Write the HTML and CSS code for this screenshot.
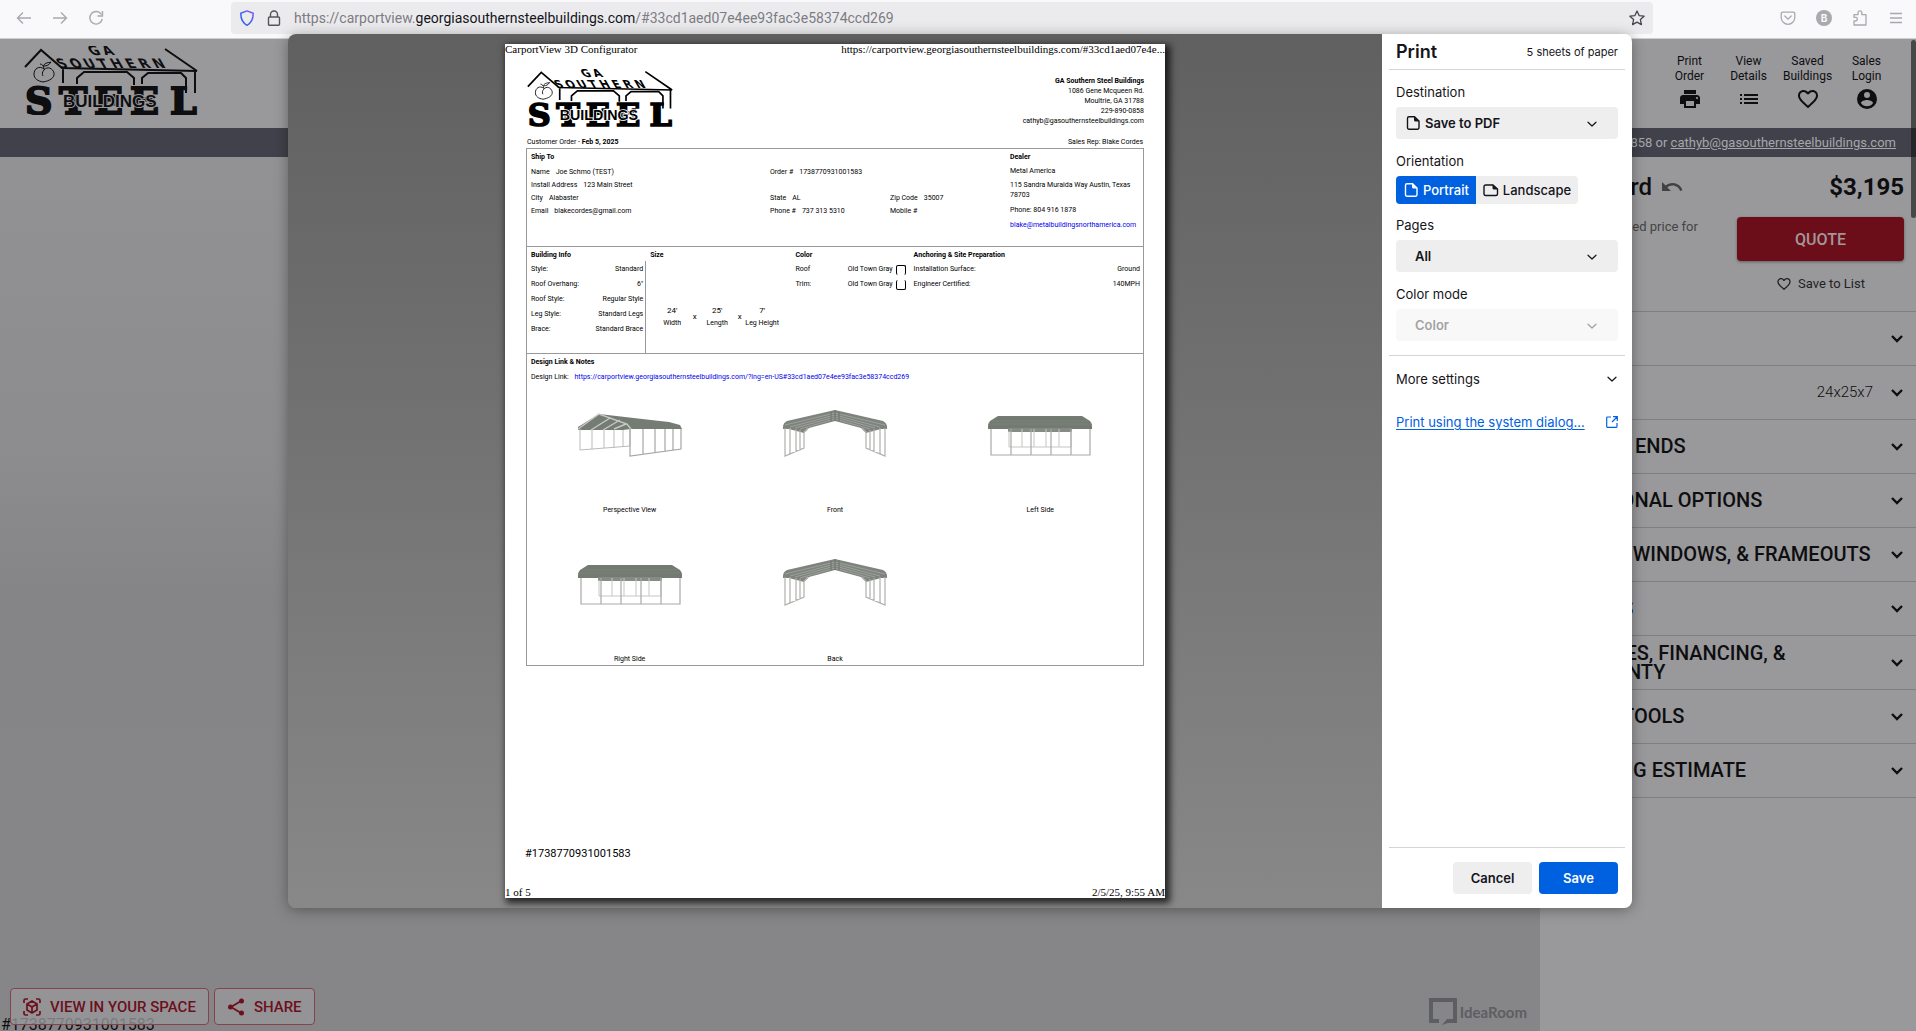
FILE: index.html
```html
<!DOCTYPE html>
<html lang="en">
<head>
<meta charset="utf-8">
<meta name="viewport" content="width=device-width, initial-scale=1">
<title>CarportView 3D Configurator</title>
<link rel="stylesheet" href="styles.css">
</head>
<body>
<svg class="defs" aria-hidden="true">
  <symbol id="chevron" viewBox="0 0 12 12"><path d="M2 4.200 6 8l4-3.800" fill="none" stroke="currentColor" stroke-width="1.200" stroke-linecap="round" stroke-linejoin="round"/></symbol>
  <symbol id="expand" viewBox="0 0 24 24"><path d="M7 9l5 5 5-5" fill="none" stroke="currentColor" stroke-width="2.400"/></symbol>
  <symbol id="heart" viewBox="0 0 24 24"><path fill="currentColor" d="M16.500 3c-1.740 0-3.410.81-4.500 2.090C10.910 3.810 9.240 3 7.500 3 4.420 3 2 5.420 2 8.500c0 3.780 3.400 6.860 8.550 11.540L12 21.350l1.450-1.320C18.600 15.360 22 12.280 22 8.500 22 5.420 19.580 3 16.500 3zm-4.400 15.550-.1.100-.1-.1C7.140 14.240 4 11.390 4 8.500 4 6.500 5.500 5 7.500 5c1.540 0 3.040.99 3.570 2.360h1.870C13.460 5.990 14.960 5 16.500 5c2 0 3.500 1.500 3.500 3.500 0 2.890-3.140 5.740-7.900 10.050z"/></symbol>
  <symbol id="portrait" viewBox="0 0 16 16"><path d="M4 1.700h5.500L14 6v6.800a1.500 1.500 0 0 1-1.500 1.500H4a1.500 1.500 0 0 1-1.500-1.500V3.200A1.500 1.500 0 0 1 4 1.700z" fill="none" stroke="currentColor" stroke-width="1.400"/><path d="M9 1.500V5a1.500 1.500 0 0 0 1.500 1.500H14z" fill="currentColor"/></symbol>
  <symbol id="landscape" viewBox="0 0 16 16"><path d="M2.500 3h7.500L14.500 7v5a1.500 1.500 0 0 1-1.500 1.500H2.500A1.500 1.500 0 0 1 1 12V4.500A1.500 1.500 0 0 1 2.500 3z" fill="none" stroke="currentColor" stroke-width="1.400"/><path d="M9.500 2.500V6A1.500 1.500 0 0 0 11 7.500h4z" fill="currentColor"/></symbol>
  <symbol id="brand" viewBox="0 0 174 69">
    <g fill="none" stroke="currentColor" stroke-width="2">
      <path d="M1 21 17 4l21 18 135 3M141 3l32 22M39 22v15M171 25v22"/>
      <path d="M53 38v-6l7-6h43l7 6v7M118 38v-6l6-5h33l5 5v15"/>
      <path stroke-width="1" d="M20 23c-5-4-10 0-10 5 0 5 4 7 9 8 6-1 12-4 11-9-1-5-7-7-10-3-2 2-2 4-1 6M20 23c0-3-2-5-4-5M19 20c3-4 5-3 8-4-2 3-4 4-7 4"/>
    </g>
    <g fill="currentColor">
      <text class="brand-block" font-size="13" x="65 79" y="9" transform="skewX(30) translate(-3 0)">GA</text>
      <text class="brand-block" font-size="13" x="35 48 62 76 89 104 117 131" y="22" transform="skewX(30) translate(-12 0)">SOUTHERN</text>
      <text class="brand-slab" font-size="38" x="1 35 70 106 146" y="68">STEEL</text>
      <text class="brand-name" font-size="17" x="39" y="61">BUILDINGS</text>
    </g>
  </symbol>
  <symbol id="front" viewBox="0 0 104 60">
    <path d="M52 9 100 20Q104 22 104 26V28H98L83 32 78 27 52 20 26 27 21 32 6 28H0V26Q0 22 4 20z" fill="#7e837d"/>
    <path d="M2 24 52 12l50 12M7 26l45-12 45 12M12 27l40-11 40 11M17 28l35-10 35 10" fill="none" stroke="#a3a7a2" stroke-width=".8"/>
    <path d="M52 9v11M48 11v9M56 11v9" stroke="#6c716b"/>
    <path d="M2 27v28l19-8V31l4-4M7 27v26M13 28v23M17 29v20M102 27v28l-19-8V31l-4-4M97 27v26M91 28v23M87 29v20" fill="none" stroke="#b0b0ac" stroke-width="1.200"/>
  </symbol>
  <symbol id="side" viewBox="0 0 104 60">
    <path d="M10 15h84l8 5q2 2 2 6v2H0v-2q0-4 2-6z" fill="#727a71"/><path d="M20 27h64v4H20z" fill="#868c85"/>
    <path d="M4 20h96M2 23h100" stroke="#7c837b"/>
    <path d="M21 30v16h62V30M34 28v18M46 28v18M58 28v18M71 28v18" fill="none" stroke="#c5c5c3"/>
    <path d="M3 28v26h99V28M23 28v26M43 28v26M63 28v26M83 28v26" fill="none" stroke="#a9aaa7" stroke-width="1.200"/>
  </symbol>
  <symbol id="perspective" viewBox="0 0 104 60">
    <path d="M21 13 73 19 91 21 102 24 104 28 53 28 45 29H0V26z" fill="#757c74"/>
    <path d="M0 28 21 13 49 23l4 5M13 29 32 17M25 29 42 19M36 28 48 23" fill="none" stroke="#c8c9c6" stroke-width="1.400"/>
    <path d="M2 28v21l50-4V27M14 29v19M26 29v18M36 29v18M45 29v17" fill="none" stroke="#bbbbb8"/>
    <path d="M52 27v28l51-7V28M65 28v25M77 28v24M87 28v22M95 28v21" fill="none" stroke="#a6a7a4" stroke-width="1.200"/>
  </symbol>
</svg>

<header class="toolbar">
  <nav class="toolbar-nav">
    <button aria-label="Back"><svg width="16" height="16" viewBox="0 0 16 16"><path d="M15 8H1.500M7 2.500 1.500 8 7 13.500" fill="none" stroke="currentColor" stroke-width="1.400"/></svg></button>
    <button aria-label="Forward"><svg width="16" height="16" viewBox="0 0 16 16"><path d="M1 8h13.500M9 2.500 14.500 8 9 13.500" fill="none" stroke="currentColor" stroke-width="1.400"/></svg></button>
    <button aria-label="Reload"><svg width="16" height="16" viewBox="0 0 16 16"><path d="M13.500 4.500A6.300 6.300 0 1 0 14.300 9M14.500 1v5h-5" fill="none" stroke="currentColor" stroke-width="1.400"/></svg></button>
  </nav>
  <div class="address">
    <svg class="shield" width="16" height="16" viewBox="0 0 16 16"><defs><linearGradient id="sg" x1="0" y1="1" x2="1" y2="0"><stop offset="0" stop-color="#1d62f0"/><stop offset="1" stop-color="#7a5cf5"/></linearGradient></defs><path d="M8 .9 14.200 3.200C14.300 9 12.500 13 8 15.300 3.500 13 1.700 9 1.800 3.200z" fill="none" stroke="url(#sg)" stroke-width="1.500" stroke-linejoin="round"/></svg>
    <svg width="16" height="16" viewBox="0 0 16 16"><path d="M4.500 7V4.500a3.500 3.500 0 0 1 7 0V7M3.500 7h9a1 1 0 0 1 1 1v6.200a1 1 0 0 1-1 1h-9a1 1 0 0 1-1-1V8a1 1 0 0 1 1-1z" fill="none" stroke="#55555c" stroke-width="1.400"/></svg>
    <span class="url">https://carportview.<b>georgiasouthernsteelbuildings.com</b>/#33cd1aed07e4ee93fac3e58374ccd269</span>
    <button class="star" aria-label="Bookmark"><svg width="16" height="16" viewBox="0 0 16 16"><path d="m8 1 2.100 4.600 5 .6-3.700 3.400 1 5L8 12.100l-4.400 2.500 1-5L.9 6.200l5-.6z" fill="none" stroke="#45454c" stroke-width="1.300" stroke-linejoin="round"/></svg></button>
  </div>
  <div class="toolbar-tools">
    <button aria-label="Pocket"><svg width="16" height="16" viewBox="0 0 16 16"><path d="M2.500 2.200h11a1.300 1.300 0 0 1 1.300 1.300V7.500a6.800 6.800 0 0 1-13.600 0v-4a1.300 1.300 0 0 1 1.300-1.300zM4.800 6 8 9.200 11.200 6" fill="none" stroke="currentColor" stroke-width="1.300" stroke-linecap="round"/></svg></button>
    <button class="account" aria-label="Account">B</button>
    <button aria-label="Extensions"><svg width="16" height="16" viewBox="0 0 16 16"><path d="M2 15V11h1.500a1.800 1.800 0 0 0 0-3.600H2V4.600h4V2.800a1.900 1.900 0 0 1 3.800 0v1.800H14V15z" fill="none" stroke="currentColor" stroke-width="1.300" stroke-linejoin="round"/></svg></button>
    <button aria-label="Menu"><svg width="16" height="16" viewBox="0 0 16 16"><path d="M2 3.500h12M2 8h12M2 12.500h12" stroke="currentColor" stroke-width="1.300"/></svg></button>
  </div>
</header>

<main class="site">
  <header class="site-head">
    <svg class="site-logo" viewBox="0 0 174 69" role="img" aria-label="GA Southern Steel Buildings"><use href="#brand"/></svg>
    <nav class="site-nav">
      <a href="#print">Print<br>Order<svg viewBox="0 0 24 24"><path fill="currentColor" d="M19 8H5c-1.660 0-3 1.340-3 3v6h4v4h12v-4h4v-6c0-1.660-1.340-3-3-3zm-3 11H8v-5h8v5zm3-7c-.55 0-1-.45-1-1s.45-1 1-1 1 .45 1 1-.45 1-1 1zm-1-9H6v4h12V3z"/></svg></a>
      <a href="#details">View<br>Details<svg viewBox="0 0 24 24"><path fill="currentColor" d="M3 13h2v-2H3v2zm0 4h2v-2H3v2zm0-8h2V7H3v2zm4 4h14v-2H7v2zm0 4h14v-2H7v2zM7 7v2h14V7H7z"/></svg></a>
      <a href="#saved">Saved<br>Buildings<svg viewBox="0 0 24 24"><use href="#heart"/></svg></a>
      <a href="#login">Sales<br>Login<svg viewBox="0 0 24 24"><path fill="currentColor" d="M12 2a10 10 0 1 0 0 20 10 10 0 0 0 0-20zm0 3a3 3 0 1 1 0 6 3 3 0 0 1 0-6zm0 14.200a7.200 7.200 0 0 1-6-3.220c.03-1.990 4-3.080 6-3.080 1.990 0 5.970 1.090 6 3.080a7.200 7.200 0 0 1-6 3.220z"/></svg></a>
    </nav>
  </header>
  <p class="contact">Call 229-890-0858 or <a href="mailto:cathyb@gasouthernsteelbuildings.com">cathyb@gasouthernsteelbuildings.com</a></p>
  <div class="workspace">
    <section class="canvas">
      <p class="order-tag">#1738770931001583</p>
      <div class="canvas-actions">
        <button><svg width="20" height="20" viewBox="0 0 20 20"><path d="M2 6V3.500A1.500 1.500 0 0 1 3.500 2H6M14 2h2.500A1.500 1.500 0 0 1 18 3.500V6M18 14v2.500a1.500 1.500 0 0 1-1.500 1.500H14M6 18H3.500A1.500 1.500 0 0 1 2 16.500V14M10 4l5 3v6l-5 3-5-3V7zM5 7l5 3 5-3M10 10v6" fill="none" stroke="currentColor" stroke-width="1.700"/></svg>VIEW IN YOUR SPACE</button>
        <button><svg width="20" height="20" viewBox="0 0 20 20"><path d="M15 4 5 10l10 6" fill="none" stroke="currentColor" stroke-width="1.800"/><circle cx="15.500" cy="4" r="2.500" fill="currentColor"/><circle cx="4.500" cy="10" r="2.500" fill="currentColor"/><circle cx="15.500" cy="16" r="2.500" fill="currentColor"/></svg>SHARE</button>
      </div>
      <div class="credit"><svg width="28" height="27" viewBox="0 0 28 27"><path fill="currentColor" fill-rule="evenodd" d="M0 0h28v25h-9l-6 2 5-6h6V4H4v17h6v4H0z"/></svg>IdeaRoom</div>
    </section>
    <aside class="options">
      <div class="summary">
        <h1>Standard <button aria-label="Undo"><svg width="24" height="24" viewBox="0 0 24 24"><path fill="currentColor" d="M12.500 8c-2.650 0-5.050.99-6.900 2.600L2 7v9h9l-3.620-3.620c1.390-1.160 3.160-1.880 5.120-1.880 3.540 0 6.550 2.310 7.600 5.500l2.370-.78C21.080 11.030 17.150 8 12.500 8z"/></svg></button></h1>
        <strong class="price">$3,195</strong>
        <p class="note">Your estimated price for</p>
        <div class="buy">
          <button class="quote">QUOTE</button>
          <button class="save-list"><svg width="16" height="16"><use href="#heart"/></svg>Save to List</button>
        </div>
      </div>
      <ul class="sections">
        <li><button><span>STYLE</span><svg><use href="#expand"/></svg></button></li>
        <li><button><span>SIZE</span><i>24x25x7</i><svg><use href="#expand"/></svg></button></li>
        <li><button><span>SIDES &amp; ENDS</span><svg><use href="#expand"/></svg></button></li>
        <li><button><span>ADDITIONAL OPTIONS</span><svg><use href="#expand"/></svg></button></li>
        <li><button><span>DOORS, WINDOWS, &amp; FRAMEOUTS</span><svg><use href="#expand"/></svg></button></li>
        <li><button><span>COLORS</span><svg><use href="#expand"/></svg></button></li>
        <li><button><span>SERVICES, FINANCING, &amp;<br>WARRANTY</span><svg><use href="#expand"/></svg></button></li>
        <li><button><span>SALES TOOLS</span><svg><use href="#expand"/></svg></button></li>
        <li><button><span>BUILDING ESTIMATE</span><svg><use href="#expand"/></svg></button></li>
      </ul>
    </aside>
  </div>
  <div class="scroll-thumb"></div>
</main>

<div class="overlay">
<div class="dialog" role="dialog" aria-labelledby="print-title">
  <div class="preview">
    <article class="sheet">
      <div class="running"><span>CarportView 3D Configurator</span><span>https://carportview.georgiasouthernsteelbuildings.com/#33cd1aed07e4e...</span></div>
      <div class="sheet-body">
        <div class="letterhead">
          <svg class="sheet-logo" viewBox="0 0 174 69" role="img" aria-label="GA Southern Steel Buildings"><use href="#brand"/></svg>
          <address><b>GA Southern Steel Buildings</b><br>1086 Gene Mcqueen Rd.<br>Moultrie, GA 31788<br>229-890-0858<br>cathyb@gasouthernsteelbuildings.com</address>
        </div>
        <div class="order-meta"><span>Customer Order - <b>Feb 5, 2025</b></span><span>Sales Rep: Blake Cordes</span></div>
        <div class="form">
          <section class="parties">
            <div class="ship">
              <h2>Ship To</h2>
              <dl><dt>Name</dt><dd>Joe Schmo (TEST)</dd></dl>
              <dl class="span2"><dt>Order #</dt><dd>1738770931001583</dd></dl>
              <dl class="span3"><dt>Install Address</dt><dd>123 Main Street</dd></dl>
              <dl><dt>City</dt><dd>Alabaster</dd></dl>
              <dl><dt>State</dt><dd>AL</dd></dl>
              <dl><dt>Zip Code</dt><dd>35007</dd></dl>
              <dl><dt>Email</dt><dd>blakecordes@gmail.com</dd></dl>
              <dl><dt>Phone #</dt><dd>737 313 5310</dd></dl>
              <dl><dt>Mobile #</dt><dd></dd></dl>
            </div>
            <div class="dealer">
              <h2>Dealer</h2>
              <p>Metal America</p>
              <p>115 Sandra Muraida Way Austin, Texas 78703</p>
              <p class="reach">Phone: 804 916 1878</p>
              <p class="reach"><a href="mailto:blake@metalbuildingsnorthamerica.com">blake@metalbuildingsnorthamerica.com</a></p>
            </div>
          </section>
          <section class="specs">
            <div class="info">
              <h2>Building Info</h2>
              <table>
                <tr><th>Style:</th><td>Standard</td></tr>
                <tr><th>Roof Overhang:</th><td>6"</td></tr>
                <tr><th>Roof Style:</th><td>Regular Style</td></tr>
                <tr><th>Leg Style:</th><td>Standard Legs</td></tr>
                <tr><th>Brace:</th><td>Standard Brace</td></tr>
              </table>
            </div>
            <div class="size">
              <h2>Size</h2>
              <div class="dims"><p><b>24'</b>Width</p><i>x</i><p><b>25'</b>Length</p><i>x</i><p><b>7'</b>Leg Height</p></div>
            </div>
            <div class="color">
              <h2>Color</h2>
              <table>
                <tr><th>Roof</th><td>Old Town Gray</td><td class="sw"><span class="swatch swatch-top"></span></td></tr>
                <tr><th>Trim:</th><td>Old Town Gray</td><td class="sw"><span class="swatch swatch-bottom"></span></td></tr>
              </table>
            </div>
            <div class="anchor">
              <h2>Anchoring &amp; Site Preparation</h2>
              <table>
                <tr><th>Installation Surface:</th><td>Ground</td></tr>
                <tr><th>Engineer Certified:</th><td>140MPH</td></tr>
              </table>
            </div>
          </section>
          <section class="design">
            <h2>Design Link &amp; Notes</h2>
            <p>Design Link: <a href="#design">https://carportview.georgiasouthernsteelbuildings.com/?lng=en-US#33cd1aed07e4ee93fac3e58374ccd269</a></p>
            <div class="views">
              <figure><svg><use href="#perspective"/></svg><figcaption>Perspective View</figcaption></figure>
              <figure><svg><use href="#front"/></svg><figcaption>Front</figcaption></figure>
              <figure><svg><use href="#side"/></svg><figcaption>Left Side</figcaption></figure>
              <figure><svg><use href="#side"/></svg><figcaption>Right Side</figcaption></figure>
              <figure><svg><use href="#front"/></svg><figcaption>Back</figcaption></figure>
            </div>
          </section>
        </div>
        <p class="sheet-order">#1738770931001583</p>
      </div>
      <div class="running"><span>1 of 5</span><span>2/5/25, 9:55 AM</span></div>
    </article>
  </div>
  <form class="settings">
    <header><h2 id="print-title">Print</h2><span>5 sheets of paper</span></header>
    <div class="fields">
      <label for="dest">Destination</label>
      <div class="select with-icon"><svg class="lead"><use href="#portrait"/></svg><select id="dest"><option>Save to PDF</option></select><svg class="caret"><use href="#chevron"/></svg></div>
      <span class="label" id="orient">Orientation</span>
      <div class="segmented" role="radiogroup" aria-labelledby="orient">
        <label><input type="radio" name="o" checked><svg><use href="#portrait"/></svg>Portrait</label>
        <label><input type="radio" name="o"><svg><use href="#landscape"/></svg>Landscape</label>
      </div>
      <label for="pages">Pages</label>
      <div class="select"><select id="pages"><option>All</option></select><svg class="caret"><use href="#chevron"/></svg></div>
      <label for="mode">Color mode</label>
      <div class="select disabled"><select id="mode" disabled><option>Color</option></select><svg class="caret"><use href="#chevron"/></svg></div>
    </div>
    <div class="more">
      <button type="button">More settings<svg><use href="#chevron"/></svg></button>
      <p><a href="#system">Print using the system dialog…</a><svg width="12" height="12" viewBox="0 0 12 12"><path d="M5 1H1.500a.8.800 0 0 0-.8.800v8.700a.8.800 0 0 0 .8.800h8.700a.8.800 0 0 0 .8-.8V7M7 .7h4.300V5M11 1 6 6" fill="none" stroke="currentColor" stroke-width="1.200"/></svg></p>
    </div>
    <footer><button type="button">Cancel</button><button type="submit" class="primary">Save</button></footer>
  </form>
</div>
</div>
</body>
</html>
```
FILE: styles.css
```css
* { box-sizing: border-box; }
body {
  margin: 0;
  min-height: 100vh;
  display: flex;
  flex-direction: column;
  font-family: Roboto, "Liberation Sans", sans-serif;
  background: #99999b;
  color: #0e0e10;
  overflow: hidden;
}
h1, h2, p, dl, dd, ul, figure { margin: 0; padding: 0; }
button { border: 0; padding: 0; background: none; color: inherit; font: inherit; }
svg { display: block; flex: none; }
a { color: inherit; }
.defs { position: absolute; width: 0; height: 0; }

/* Browser toolbar */
.toolbar {
  height: 39px;
  display: flex;
  align-items: center;
  padding: 0 12px 2px 16px;
  background: #f9f9fb;
  border-bottom: 1px solid #cfcfd2;
  color: #a9a9ae;
}
.toolbar-nav { display: flex; gap: 20px; width: 215px; }
.address {
  flex: 1;
  height: 32px;
  display: flex;
  align-items: center;
  gap: 12px;
  padding: 0 8px;
  border-radius: 4px;
  background: #ebebee;
}
.shield { margin-right: -1px; }
.url { flex: 1; font: 14px/18px Roboto, sans-serif; color: #7c7c82; white-space: nowrap; }
.url b { font-weight: 400; color: #15141a; }
.toolbar-tools { display: flex; align-items: center; gap: 20px; margin-left: 127px; }
.account {
  width: 16px;
  height: 16px;
  border-radius: 50%;
  background: #a9a9ae;
  color: #f9f9fb;
  font: 700 10px/16px Inter, sans-serif;
}

/* Configurator site */
.site { position: relative; flex: 1; display: flex; flex-direction: column; }
.site-head {
  height: 89px;
  display: flex;
  justify-content: space-between;
  align-items: flex-start;
  padding: 7px 20px 0 24px;
}
.site-logo { width: 174px; height: 69px; --paper: #99999b; }
.brand-block { font-family: "DejaVu Sans", sans-serif; font-weight: 700; }
.brand-slab {
  font-family: "DejaVu Serif", serif;
  font-weight: 700;
  stroke: currentColor;
  stroke-width: 2px;
}
.brand-name {
  font-family: "Liberation Sans", sans-serif;
  font-weight: 700;
  stroke: var(--paper);
  stroke-width: 2px;
  paint-order: stroke;
}
.site-nav { display: flex; padding-top: 8px; }
.site-nav a {
  width: 59px;
  text-align: center;
  text-decoration: none;
  font-size: 12px;
  line-height: 15px;
}
.site-nav svg { width: 24px; height: 24px; margin: 3px auto 0; }
.contact {
  padding-right: 20px;
  text-align: right;
  font-size: 13px;
  line-height: 29px;
  background: #41414b;
  color: #a6a6aa;
}
.workspace { flex: 1; display: flex; }
.canvas {
  position: relative;
  flex: 1;
  display: flex;
  align-items: flex-end;
  justify-content: space-between;
  padding: 0 13px 6px 10px;
  background: linear-gradient(#929294, #8c8c8f 35%, #858587 50%, #868688);
}
.order-tag { position: absolute; left: 1px; bottom: -3px; font-size: 16px; line-height: 19px; }
.canvas-actions { position: relative; display: flex; gap: 5px; }
.canvas-actions button {
  height: 37px;
  display: flex;
  align-items: center;
  gap: 8px;
  padding: 0 12px 0 11px;
  border: 1px solid #87434c;
  border-radius: 4px;
  background: rgba(153, 153, 155, .78);
  color: #6d0f1c;
  font-size: 15px;
  font-weight: 500;
}
.credit { display: flex; align-items: center; gap: 3px; color: #5d5e61; font: 700 15px Lato, sans-serif; }

.options { width: 376px; }
.summary {
  height: 154px;
  display: grid;
  grid-template-columns: 1fr 167px;
  grid-template-rows: 60px 1fr;
  padding: 0 12px 0 15px;
}
.summary h1 { display: flex; align-items: center; gap: 8px; font-size: 24px; font-weight: 500; }
.summary h1 svg { color: #414144; }
.price { align-self: center; text-align: right; font-size: 24px; font-weight: 700; }
.note { padding-left: 4px; font-size: 13px; line-height: 19px; color: #444447; }
.buy { display: flex; flex-direction: column; align-items: center; gap: 14px; }
.quote {
  align-self: stretch;
  height: 44px;
  border-radius: 4px;
  background: #6b0e19;
  color: #a3979a;
  font-size: 16px;
  font-weight: 500;
  box-shadow: 0 1px 3px rgba(0, 0, 0, .4);
}
.save-list { display: flex; align-items: center; gap: 6px; font-size: 13px; line-height: 18px; color: #222225; }
.sections { list-style: none; }
.sections li { height: 54px; border-top: 1px solid #7f7f82; }
.sections li:last-child { height: 55px; border-bottom: 1px solid #7f7f82; }
.sections button {
  width: 100%;
  height: 100%;
  display: flex;
  align-items: center;
  gap: 12px;
  padding: 0 7px 0 18px;
  text-align: left;
  font-size: 20px;
  line-height: 19px;
  font-weight: 500;
}
.sections span { flex: 1; white-space: nowrap; }
.sections i { font-style: normal; font-weight: 300; font-size: 15px; }
.sections svg { width: 24px; height: 24px; }
.scroll-thumb {
  position: absolute;
  right: 0;
  top: 1px;
  width: 5px;
  height: 178px;
  border-radius: 4px;
  background: rgba(18, 18, 20, .6);
}

/* Print dialog */
.overlay { position: absolute; inset: 34px 0 auto 0; padding: 0 284px 0 288px; }
.dialog {
  display: flex;
  border-radius: 8px;
  overflow: hidden;
  box-shadow: 0 2px 14px rgba(0, 0, 0, .35);
}
.preview {
  flex: 1;
  display: flex;
  justify-content: center;
  padding: 10px;
  background: linear-gradient(#606060, #888888);
}
.sheet {
  width: 660px;
  min-height: 854px;
  display: flex;
  flex-direction: column;
  background: #fff;
  color: #000;
  box-shadow: 3px 3px 7px 2px rgba(0, 0, 0, .75);
  font-size: 7px;
  line-height: 10px;
}
.running {
  display: flex;
  justify-content: space-between;
  white-space: nowrap;
  font: 11px/11px "Liberation Serif", serif;
}
.sheet-body { flex: 1; display: flex; flex-direction: column; padding: 14px 21px 27px; }
.sheet a { color: #0000ee; text-decoration: none; }
.letterhead { display: flex; justify-content: space-between; padding-left: 1px; }
.sheet-logo { width: 146px; height: 58px; --paper: #fff; }
.letterhead address { padding-top: 7px; text-align: right; font-style: normal; }
.order-meta { display: flex; justify-content: space-between; margin-top: 10px; padding: 0 1px; }
.form { margin-top: 1px; border: 1px solid #999; }
.form h2 { font-size: 7px; line-height: 10px; font-weight: 700; }
.parties { min-height: 98px; display: flex; padding: 3px 0 0 4px; border-bottom: 1px solid #999; }
.ship {
  flex: 479;
  display: grid;
  grid-template-columns: 239fr 120fr 120fr;
  grid-template-rows: 14px;
  grid-auto-rows: 13px;
}
.ship h2 { grid-column: 1 / -1; }
.ship dl { display: flex; gap: 6px; line-height: 13px; }
.ship .span2 { grid-column: span 2; }
.ship .span3 { grid-column: 1 / -1; }
.dealer { flex: 0 0 133px; }
.dealer p { margin-top: 4px; }
.dealer .reach { margin-top: 5px; }
.specs {
  min-height: 107px;
  display: grid;
  grid-template-columns: 119fr 145fr 118fr 233fr;
  border-bottom: 1px solid #999;
}
.specs > div { display: flex; flex-direction: column; padding-top: 3px; }
.specs h2 { padding-left: 4px; margin-bottom: 2px; }
.specs table { width: 100%; border-collapse: collapse; line-height: 15px; }
.specs th { padding: 0 0 0 4px; text-align: left; font-weight: 400; }
.specs td { padding: 0 3px 0 0; text-align: right; }
.info { position: relative; }
.info::after { content: ""; position: absolute; right: 0; top: 14px; bottom: 0; border-right: 1px solid #999; }
.color .sw { width: 14px; }
.swatch { display: block; width: 10px; height: 10px; border: 1px solid #000; border-radius: 2px; }
.swatch-top { border-bottom: 0; }
.swatch-bottom { border-top: 0; }
.dims { display: flex; align-items: center; padding: 43px 0 0 6px; line-height: 12px; text-align: center; }
.dims p { width: 40px; white-space: nowrap; }
.dims b { display: block; font-weight: 400; font-size: 8px; }
.dims i { width: 5px; font-style: normal; font-size: 8px; }
.design { padding-top: 3px; }
.design h2, .design > p { padding-left: 4px; }
.design > p { margin-top: 5px; line-height: 11px; }
.design > p a { margin-left: 4px; }
.views { display: grid; grid-template-columns: repeat(3, 1fr); row-gap: 34px; margin-top: 18px; }
.views svg { width: 104px; height: 60px; margin: 0 auto 43px; }
.views figcaption { text-align: center; line-height: 12px; }
.sheet-order { margin: auto 0 0 -1px; font-size: 11px; line-height: 12px; }

.settings {
  flex: 0 0 250px;
  display: flex;
  flex-direction: column;
  padding: 0 7px;
  background: #fff;
  color: #15141a;
  font: 13px/16px Inter, sans-serif;
}
.settings header {
  height: 36px;
  display: flex;
  align-items: center;
  justify-content: space-between;
  padding: 0 7px;
  border-bottom: 1px solid #d4d4d6;
}
.settings h2 { font-size: 18px; line-height: 20px; font-weight: 600; }
.settings header span { font-size: 11px; }
.fields { display: flex; flex-direction: column; align-items: flex-start; padding: 14px 7px; border-bottom: 1px solid #d4d4d6; }
.fields > label, .label { line-height: 17px; margin-bottom: 6px; }
.select { position: relative; align-self: stretch; height: 32px; margin-bottom: 14px; }
.fields .select:last-child { margin-bottom: 0; }
.select select {
  width: 100%;
  height: 100%;
  appearance: none;
  border: 0;
  border-radius: 4px;
  padding: 0 32px 0 19px;
  background: #eeeeef;
  color: inherit;
  font: 600 13px Inter, sans-serif;
}
.select.with-icon select { padding-left: 29px; }
.select.disabled { opacity: .4; }
.select select:disabled { opacity: 1; }
.lead { position: absolute; left: 9px; top: 8px; width: 16px; height: 16px; }
.caret { position: absolute; right: 20px; top: 11px; width: 12px; height: 12px; }
.segmented { display: flex; border-radius: 4px; overflow: hidden; background: #eeeeef; margin-bottom: 13px; }
.segmented label { position: relative; height: 28px; display: flex; align-items: center; gap: 4px; padding: 0 7px; font-weight: 500; }
.segmented svg { width: 16px; height: 16px; }
.segmented input { position: absolute; inset: 0; margin: 0; opacity: 0; }
.segmented label:has(:checked) { background: #0061e0; color: #fff; }
.more { padding: 15px 7px; flex: 1; }
.more button { width: 100%; display: flex; align-items: center; justify-content: space-between; }
.more button svg { width: 12px; height: 12px; }
.more p { display: flex; align-items: center; justify-content: space-between; margin-top: 27px; color: #0061e0; }
.more a { text-underline-offset: 2px; }
.settings footer { display: flex; justify-content: flex-end; gap: 7px; padding: 14px 7px; border-top: 1px solid #d4d4d6; }
.settings footer button { width: 79px; height: 32px; border-radius: 4px; background: #eeeeef; font-weight: 600; }
.settings footer .primary { background: #0061e0; color: #fff; }
```
